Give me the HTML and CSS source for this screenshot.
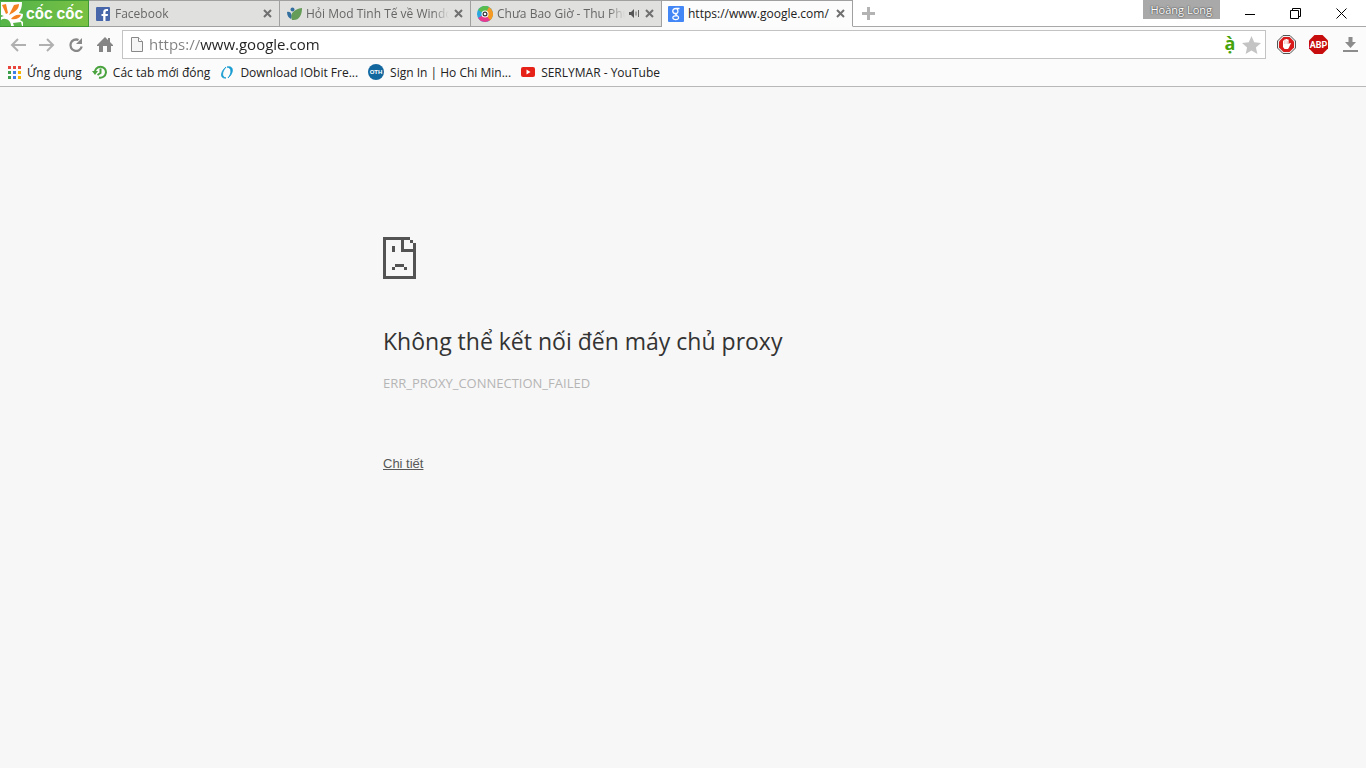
FILE: index.html
```html
<!DOCTYPE html>
<html lang="vi">
<head>
<meta charset="utf-8">
<meta name="viewport" content="width=device-width, initial-scale=1">
<title>https://www.google.com/</title>
<link rel="stylesheet" href="styles.css">
</head>
<body>
<header class="chrome">
  <div class="tabstrip">
    <button class="brand" type="button">
      <svg class="brand-mark" viewBox="0 0 22 25" width="22" height="25" aria-hidden="true">
        <path d="M0 1H21C21 6 20 9 18 12L22 13C22 16 21 18 19 19L22 21V25H0Z" fill="#fff"/>
        <path d="M1 4L5 3L7 12L5 13Z" fill="#f58220"/>
        <path d="M8 14L13 4L18 3C18 8 14 11 8 14Z" fill="#f58220"/>
        <path d="M10 18C12 15 16 13 20 14C19 17 15 19 10 18Z" fill="#f58220"/>
        <path d="M0 14L3 15L0 16Z" fill="#58b548"/>
        <path d="M0 25V19C4 16 10 19 10 25Z" fill="#58b548"/>
        <path d="M12 22L20 21L21 25H13Z" fill="#58b548"/>
      </svg>
      <span class="brand-name">cốc cốc</span>
    </button>
    <nav class="tabs" aria-label="Tabs">
      <div class="tab">
        <svg class="favicon" viewBox="0 0 16 16" width="16" height="16" aria-hidden="true"><rect width="14" height="14" y="1" x="1" rx="1" fill="#4867aa"/><path d="M13 5H12C11 5 10.500 5.500 10.500 6.500V8H13L12.700 10H10.500V15H8.200V10H6.500V8H8.200V6C8.200 4 9.500 3 11.200 3H13Z" fill="#fff"/></svg>
        <span class="tab-title">Facebook</span>
        <button class="tab-close" type="button" aria-label="Đóng"><svg viewBox="0 0 9 9" width="9" height="9"><path d="M1 1L8 8M8 1L1 8"/></svg></button>
      </div>
      <div class="tab">
        <svg class="favicon" viewBox="0 0 16 16" width="16" height="16" aria-hidden="true"><path d="M6 14C3 8 8 3 16 2C16 9 13 15 6 14Z" fill="#659c57"/><path d="M1 6C5 5 6 8 5 13C3 12 1 10 1 6Z" fill="#34709f"/><circle cx="6.500" cy="3.500" r="2" fill="#34709f"/></svg>
        <span class="tab-title">Hỏi Mod Tinh Tế về Windo</span>
        <button class="tab-close" type="button" aria-label="Đóng"><svg viewBox="0 0 9 9" width="9" height="9"><path d="M1 1L8 8M8 1L1 8"/></svg></button>
      </div>
      <div class="tab">
        <svg class="favicon" viewBox="0 0 16 16" width="16" height="16" aria-hidden="true"><circle cx="8" cy="8" r="8" fill="#2ba7df"/><path d="M8 8L1 4A8 8 0 0 1 12 1Z" fill="#58bd4d"/><path d="M8 8L12 1A8 8 0 0 1 12 15Z" fill="#f59a23"/><path d="M8 8L13 14A8 8 0 0 1 1 12Z" fill="#e8398c"/><circle cx="8" cy="8" r="3.500" fill="#fff"/><circle cx="8" cy="8" r="2.500" fill="#333"/><circle cx="8" cy="8" r="1.300" fill="#fff"/></svg>
        <span class="tab-title">Chưa Bao Giờ - Thu Phư</span>
        <svg class="tab-audio" viewBox="0 0 11 9" width="11" height="9" aria-hidden="true"><path d="M0 3H2L5 0V9L2 6H0Z" fill="#555"/><path d="M7 2.500V6.500M9.500 1V8" stroke="#666" fill="none"/></svg>
        <button class="tab-close" type="button" aria-label="Đóng"><svg viewBox="0 0 9 9" width="9" height="9"><path d="M1 1L8 8M8 1L1 8"/></svg></button>
      </div>
      <div class="tab tab-active" aria-current="page">
        <svg class="favicon" viewBox="0 0 16 16" width="16" height="16" aria-hidden="true"><rect width="16" height="16" rx="1" fill="#4387f6"/><path d="M11.500 2.500H8C5.500 2.500 4.500 4 4.800 5.500C5.200 7.500 7 7.800 8.300 7.300M8.500 2.800C10.500 4 10.500 7 8.300 7.500C7 8 8 8.800 9 9.500C12 11.500 10.500 13.700 7.700 13.600C4.500 13.500 4 11 6 10.200C7 9.800 8 9.700 9 9.700" fill="none" stroke="#fff" stroke-width="1.300"/></svg>
        <span class="tab-title">https://www.google.com/</span>
        <button class="tab-close" type="button" aria-label="Đóng"><svg viewBox="0 0 9 9" width="9" height="9"><path d="M1 1L8 8M8 1L1 8"/></svg></button>
      </div>
    </nav>
    <button class="new-tab" type="button" aria-label="Tab mới"><svg viewBox="0 0 13 13" width="13" height="13"><path d="M6.500 0V13M0 6.500H13" stroke="#b3b3b3" stroke-width="3"/></svg></button>
    <button class="profile" type="button">Hoàng Long</button>
    <div class="window-controls">
      <button type="button" aria-label="Thu nhỏ"><svg viewBox="0 0 11 11" width="11" height="11"><path d="M1 6.500H11"/></svg></button>
      <button type="button" aria-label="Khôi phục"><svg viewBox="0 0 11 11" width="11" height="11"><path d="M0.500 2.500H8.500V10.500H0.500ZM2.500 2.500V0.500H10.500V8.500H8.500"/></svg></button>
      <button type="button" aria-label="Đóng cửa sổ"><svg viewBox="0 0 11 11" width="11" height="11"><path d="M0.500 0.500L10.500 10.500M10.500 0.500L0.500 10.500"/></svg></button>
    </div>
  </div>

  <div class="toolbar">
    <button class="tool" type="button" aria-label="Quay lại"><svg viewBox="0 0 16 14" width="16" height="14"><path d="M8 1L2 7L8 13M2 7H16" fill="none" stroke="#b0b0b0" stroke-width="2"/></svg></button>
    <button class="tool" type="button" aria-label="Tiến"><svg viewBox="0 0 16 14" width="16" height="14"><path d="M8 1L14 7L8 13M14 7H0" fill="none" stroke="#b0b0b0" stroke-width="2"/></svg></button>
    <button class="tool" type="button" aria-label="Tải lại"><svg viewBox="0 0 16 16" width="16" height="16"><path d="M10.500 3A5.700 5.700 0 1 0 13.700 9.500" fill="none" stroke="#888" stroke-width="2.300"/><path d="M14 1V7H8Z" fill="#888"/></svg></button>
    <button class="tool" type="button" aria-label="Trang chủ"><svg viewBox="0 0 16 15" width="16" height="15"><path d="M8 0L11 3V1H13V5L16 8V9H14V15H10V9H6V15H2V9H0V8Z" fill="#858585"/></svg></button>
    <div class="omnibox">
      <svg viewBox="0 0 12 15" width="12" height="15" aria-hidden="true"><path d="M0.500 0.500H7.500L11.500 4.500V14.500H0.500Z" fill="#f5f5f5" stroke="#888"/><path d="M7.500 0.500V4.500H11.500" fill="#fff" stroke="#888"/></svg>
      <input class="url" type="text" value="https://www.google.com" aria-label="Địa chỉ" spellcheck="false">
      <button class="accent" type="button">ạ̀</button>
      <button class="star" type="button" aria-label="Đánh dấu trang"><svg viewBox="0 0 19 18" width="19" height="18"><path d="M9.500 0L12.200 6.200L19 6.900L13.900 11.400L15.400 18L9.500 14.600L3.600 18L5.100 11.400L0 6.900L6.800 6.200Z" fill="#c4c4c4"/></svg></button>
    </div>
    <div class="extensions">
      <button class="ext" type="button" aria-label="AdBlock"><svg viewBox="0 0 19 19" width="19" height="19"><path d="M6 0.500H13L18.500 6V13L13 18.500H6L0.500 13V6Z" fill="#eee" stroke="#555"/><path d="M6.500 2H12.500L17 6.500V12.500L12.500 17H6.500L2 12.500V6.500Z" fill="#d91b1b"/><path d="M6 9V5.500H7.300V4.500H8.700V4H10.200V4.500H11.600V9L13 8H14L12 12.500L11 14H7.500L6 12Z" fill="#fff"/><path d="M7.500 6V9M9 5V9M10.500 6V9" stroke="#e99" stroke-width="0.500"/></svg></button>
      <button class="ext" type="button" aria-label="Adblock Plus"><svg viewBox="0 0 19 19" width="19" height="19"><path d="M5.500 0H13.500L19 5.500V13.500L13.500 19H5.500L0 13.500V5.500Z" fill="#c70d0d"/><text x="9.500" y="13" class="abp-letters">ABP</text></svg></button>
      <button class="ext" type="button" aria-label="Tải xuống"><svg viewBox="0 0 15 15" width="15" height="15"><path d="M5.500 0H9.500V5H13L7.500 11L2 5H5.500ZM0 13H15V15H0Z" fill="#8c8c8c"/></svg></button>
    </div>
  </div>

  <nav class="bookmarks" aria-label="Dấu trang">
    <a href="#"><svg viewBox="0 0 13 13" width="13" height="13" aria-hidden="true"><path d="M0 0H3V3H0ZM5 0H8V3H5ZM10 0H13V3H10Z" fill="#e8453c"/><path d="M0 5H3V8H0ZM0 10H3V13H0Z" fill="#3b9e4b"/><path d="M5 5H8V8H5ZM5 10H8V13H5Z" fill="#3c7de6"/><path d="M10 5H13V8H10ZM10 10H13V13H10Z" fill="#f4b400"/></svg><span>Ứng dụng</span></a>
    <a href="#"><svg viewBox="0 0 15 14" width="15" height="14" aria-hidden="true"><path d="M3 8A5.500 5.500 0 1 1 7 12.500M8.500 3.500V8L5.500 10" fill="none" stroke="#4aa33f" stroke-width="2"/><path d="M0 6H6L3 10Z" fill="#4aa33f"/></svg><span>Các tab mới đóng</span></a>
    <a href="#"><svg viewBox="0 0 14 13" width="14" height="13" aria-hidden="true"><path d="M6 12C0 13 0 6 6 1C1 7 2 11 6 12ZM7 1C14-1 14 7 8 12C12 7 12 2 7 1Z" fill="#159bd0" stroke="#159bd0" stroke-width="0.800"/></svg><span>Download IObit Fre...</span></a>
    <a href="#"><svg viewBox="0 0 16 16" width="16" height="16" aria-hidden="true"><circle cx="8" cy="8" r="8" fill="#13679f"/><text x="8" y="10" class="oth-letters">OTH</text></svg><span>Sign In | Ho Chi Min...</span></a>
    <a href="#"><svg viewBox="0 0 14 10" width="14" height="10" aria-hidden="true"><rect width="14" height="10" rx="2" fill="#e62117"/><path d="M5.500 2.500V7.500L9.500 5Z" fill="#fff"/></svg><span>SERLYMAR - YouTube</span></a>
  </nav>
</header>

<main class="error-page">
  <svg class="sad-page" viewBox="0 0 11 14" width="33" height="42" shape-rendering="crispEdges" aria-hidden="true"><path d="M0 0H9V1H7V4H10V2H11V14H0ZM1 1V13H10V5H6V1ZM9 1H10V2H9ZM3 3H4V5H3ZM4 9H7V10H4ZM3 10H4V11H3ZM7 10H8V11H7Z" fill="#535353" fill-rule="evenodd"/></svg>
  <h1>Không thể kết nối đến máy chủ proxy</h1>
  <p class="error-code">ERR_PROXY_CONNECTION_FAILED</p>
  <a class="details" href="#">Chi tiết</a>
</main>
</body>
</html>
```
FILE: styles.css
```css
* {
  box-sizing: border-box;
}

body {
  margin: 0;
  min-height: 100vh;
  background: #f7f7f7;
  color: #333;
  font-family: "Open Sans", "Noto Sans", sans-serif;
  font-size: 12px;
}

button {
  margin: 0;
  padding: 0;
  border: 0;
  background: none;
  font: inherit;
}

svg {
  display: block;
  flex: none;
}

.chrome {
  background: #fbfbfb;
  border-bottom: 1px solid #b8b8b8;
}

.tabstrip {
  display: flex;
  height: 27px;
  background: linear-gradient(#fff, #fff) 0 0 / 100% 26px no-repeat #a8a8a8;
}

.brand {
  display: flex;
  align-items: center;
  gap: 3px;
  width: 89px;
  padding: 0 1px;
  border: solid #3f9a35;
  border-width: 1px 1px 1px 0;
  background: linear-gradient(90deg, #4fb24a, #79c143);
}

.brand-name {
  color: #fff;
  font-family: Inter, "Open Sans", sans-serif;
  font-size: 15px;
  font-weight: 700;
  line-height: 24px;
  white-space: nowrap;
}

.tabs {
  display: flex;
}

.tab {
  display: flex;
  align-items: center;
  width: 191px;
  padding: 0 7px 0 6px;
  border: solid #a0a0a0;
  border-width: 1px 1px 1px 0;
  background: #e0e1df;
  color: #666;
}

.tab-active {
  border-bottom-color: #fcfcfc;
  background: #fcfcfc;
  color: #222;
}

.favicon {
  margin-right: 4px;
}

.tab-title {
  flex: 1;
  min-width: 0;
  overflow: hidden;
  white-space: nowrap;
  mask-image: linear-gradient(90deg, #000 calc(100% - 16px), transparent);
}

.tab-audio {
  margin-left: 4px;
}

.tab-close {
  margin-left: 5px;
}

.tab-active .tab-title {
  mask-image: none;
}

.tab-close svg {
  fill: none;
  stroke: #707070;
  stroke-width: 2;
}

.new-tab {
  display: grid;
  place-items: center;
  width: 31px;
}

.profile {
  height: 19px;
  margin-left: auto;
  padding: 0 8px;
  background: #a9a9a9;
  color: #fff;
  font-size: 11px;
  line-height: 18px;
  text-shadow: 0 0 2px #444, 0 0 1px #444;
  white-space: nowrap;
}

.window-controls {
  display: flex;
  margin-left: 6px;
  padding-right: 2px;
}

.window-controls button {
  display: grid;
  place-items: center;
  width: 46px;
}

.window-controls svg {
  fill: none;
  stroke: #000;
}

.toolbar {
  display: flex;
  align-items: center;
  height: 35px;
  padding-left: 3px;
}

.tool {
  display: grid;
  place-items: center;
  width: 29px;
  height: 29px;
}

.omnibox {
  display: flex;
  flex: 1;
  align-items: center;
  height: 29px;
  margin: 0 4px 0 3px;
  padding: 0 4px 0 8px;
  border: 1px solid #c3c3c3;
  background: #fff;
}

.url {
  flex: 1;
  min-width: 0;
  height: 27px;
  margin-left: 6px;
  padding: 0 0 2px;
  border: 0;
  outline: 0;
  background: linear-gradient(90deg, #808080 51px, #222 51px);
  background-clip: text;
  -webkit-background-clip: text;
  color: transparent;
  font: 15px "Open Sans", sans-serif;
}

.accent {
  width: 14px;
  padding-bottom: 4px;
  color: #46a30b;
  font-size: 18px;
  font-weight: 700;
  line-height: 22px;
}

.star {
  margin-left: 5px;
}

.extensions {
  display: flex;
}

.ext {
  display: grid;
  place-items: center;
  width: 32px;
}

.abp-letters {
  fill: #fff;
  font: 700 9px Roboto, sans-serif;
  text-anchor: middle;
}

.bookmarks {
  display: flex;
  align-items: center;
  gap: 10px;
  height: 24px;
  padding: 0 8px 4px;
}

.bookmarks a {
  display: flex;
  align-items: center;
  gap: 6px;
  color: #222;
  text-decoration: none;
  white-space: nowrap;
}

.oth-letters {
  fill: #fff;
  font: 700 6px "Liberation Sans", sans-serif;
  text-anchor: middle;
}

.error-page {
  max-width: 600px;
  margin: 0 auto;
  padding-top: 150px;
}

.error-page h1 {
  margin: 46px 0 17px;
  font-size: 23px;
  font-weight: 400;
  line-height: 32px;
}

.error-code {
  margin: 0 0 63px;
  color: #b5b5b5;
  font-size: 13px;
  line-height: 18px;
}

.details {
  color: #585858;
  font-family: "Liberation Sans", Arial, sans-serif;
  font-size: 13px;
}
```
